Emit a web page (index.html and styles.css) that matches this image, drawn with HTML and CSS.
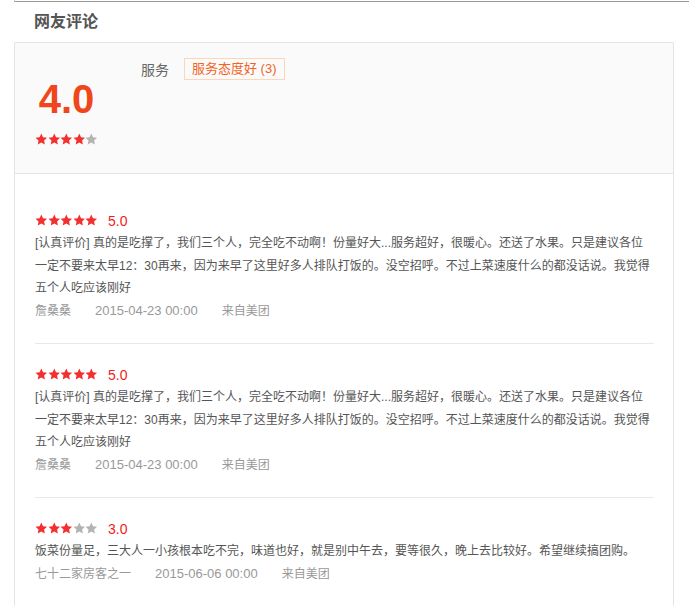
FILE: index.html
```html
<!DOCTYPE html>
<html lang="zh-CN">
<head>
    <meta charset="UTF-8">
    <title>网友评论</title>
    <link rel="stylesheet" href="styles.css">
</head>
<body>
    <svg class="icon-defs" aria-hidden="true">
        <symbol id="star" viewBox="0 0 24 24">
            <path d="M12 1l3.3 7 7.7.9-5.7 5.3 1.5 7.6L12 18l-6.8 3.8 1.5-7.6L1 8.9 8.7 8z"/>
        </symbol>
    </svg>

    <div class="prev-box"></div>

    <h2 class="section-title">网友评论</h2>

    <div class="comment-box">
        <div class="summary">
            <div class="score-col">
                <div class="score">4.0</div>
                <div class="stars">
                    <svg class="star on"><use href="#star"/></svg>
                    <svg class="star on"><use href="#star"/></svg>
                    <svg class="star on"><use href="#star"/></svg>
                    <svg class="star on"><use href="#star"/></svg>
                    <svg class="star"><use href="#star"/></svg>
                </div>
            </div>
            <div class="tag-row">
                <span class="tag-label">服务</span>
                <span class="tag">服务态度好 (3)</span>
            </div>
        </div>

        <ul class="review-list">
            <li class="review">
                <div class="review-rate">
                    <div class="stars">
                        <svg class="star on"><use href="#star"/></svg>
                        <svg class="star on"><use href="#star"/></svg>
                        <svg class="star on"><use href="#star"/></svg>
                        <svg class="star on"><use href="#star"/></svg>
                        <svg class="star on"><use href="#star"/></svg>
                    </div>
                    <span class="rate-num">5.0</span>
                </div>
                <p class="review-text">[认真评价] 真的是吃撑了，我们三个人，完全吃不动啊！份量好大...服务超好，很暖心。还送了水果。只是建议各位一定不要来太早12：30再来，因为来早了这里好多人排队打饭的。没空招呼。不过上菜速度什么的都没话说。我觉得五个人吃应该刚好</p>
                <div class="review-meta"><span>詹桑桑</span><span class="date">2015-04-23 00:00</span><span>来自美团</span></div>
            </li>
            <li class="review">
                <div class="review-rate">
                    <div class="stars">
                        <svg class="star on"><use href="#star"/></svg>
                        <svg class="star on"><use href="#star"/></svg>
                        <svg class="star on"><use href="#star"/></svg>
                        <svg class="star on"><use href="#star"/></svg>
                        <svg class="star on"><use href="#star"/></svg>
                    </div>
                    <span class="rate-num">5.0</span>
                </div>
                <p class="review-text">[认真评价] 真的是吃撑了，我们三个人，完全吃不动啊！份量好大...服务超好，很暖心。还送了水果。只是建议各位一定不要来太早12：30再来，因为来早了这里好多人排队打饭的。没空招呼。不过上菜速度什么的都没话说。我觉得五个人吃应该刚好</p>
                <div class="review-meta"><span>詹桑桑</span><span class="date">2015-04-23 00:00</span><span>来自美团</span></div>
            </li>
            <li class="review">
                <div class="review-rate">
                    <div class="stars">
                        <svg class="star on"><use href="#star"/></svg>
                        <svg class="star on"><use href="#star"/></svg>
                        <svg class="star on"><use href="#star"/></svg>
                        <svg class="star"><use href="#star"/></svg>
                        <svg class="star"><use href="#star"/></svg>
                    </div>
                    <span class="rate-num">3.0</span>
                </div>
                <p class="review-text">饭菜份量足，三大人一小孩根本吃不完，味道也好，就是别中午去，要等很久，晚上去比较好。希望继续搞团购。</p>
                <div class="review-meta"><span>七十二家房客之一</span><span class="date">2015-06-06 00:00</span><span>来自美团</span></div>
            </li>
        </ul>
    </div>
</body>
</html>
```

FILE: styles.css
```css
body {
    margin: 0;
    font-family: "Liberation Sans", "Noto Sans CJK SC", sans-serif;
    font-size: 12px;
    color: #555;
    background: #fff;
}

.icon-defs {
    position: absolute;
    width: 0;
    height: 0;
    overflow: hidden;
}

.prev-box {
    margin-left: 14px;
    height: 1px;
    border-left: 1px solid #ccc;
    border-bottom: 1px solid #999;
}

.section-title {
    margin: 8px 0 8px;
    padding-left: 34px;
    font-size: 16px;
    line-height: 24px;
    font-weight: bold;
    color: #555;
}

.comment-box {
    width: 660px;
    margin-left: 14px;
    box-sizing: border-box;
    border: 1px solid #e5e5e5;
    border-bottom: none;
}

.summary {
    display: flex;
    align-items: flex-start;
    padding: 15px 20px 27px;
    background-color: #fafafa;
    border-bottom: 1px solid #e5e5e5;
}

.score-col {
    width: 63px;
    margin-top: 21px;
    margin-right: 43px;
}

.score {
    font-size: 40px;
    line-height: 40px;
    font-weight: bold;
    color: #f0461c;
    text-align: center;
    margin-bottom: 14px;
}

.stars {
    display: flex;
    height: 12.6px;
}

.star {
    width: 12.6px;
    height: 12.6px;
    fill: #b3b3b3;
}

.star.on {
    fill: #f23030;
}

.tag-row {
    display: flex;
    align-items: center;
    height: 22px;
}

.tag-label {
    font-size: 14px;
    color: #666;
    margin-right: 15px;
}

.tag {
    font-size: 13px;
    line-height: 20px;
    padding: 0 7px;
    border: 1px solid #fdd6b8;
    color: #f3641e;
}

.review-list {
    list-style: none;
    margin: 0;
    padding: 16px 19px 0 20px;
}

.review {
    padding: 21px 0;
    border-bottom: 1px solid #e8e8e8;
}

.review-rate {
    display: flex;
    align-items: center;
    height: 20px;
}

.rate-num {
    margin-left: 10px;
    font-size: 14px;
    color: #f21b1b;
}

.review-text {
    margin: 1.5px 0 0;
    line-height: 22.5px;
    color: #555;
}

.review-meta {
    line-height: 22px;
    color: #999;
}

.review-meta span {
    margin-right: 24px;
}

.review-meta .date {
    font-size: 13px;
}
```
